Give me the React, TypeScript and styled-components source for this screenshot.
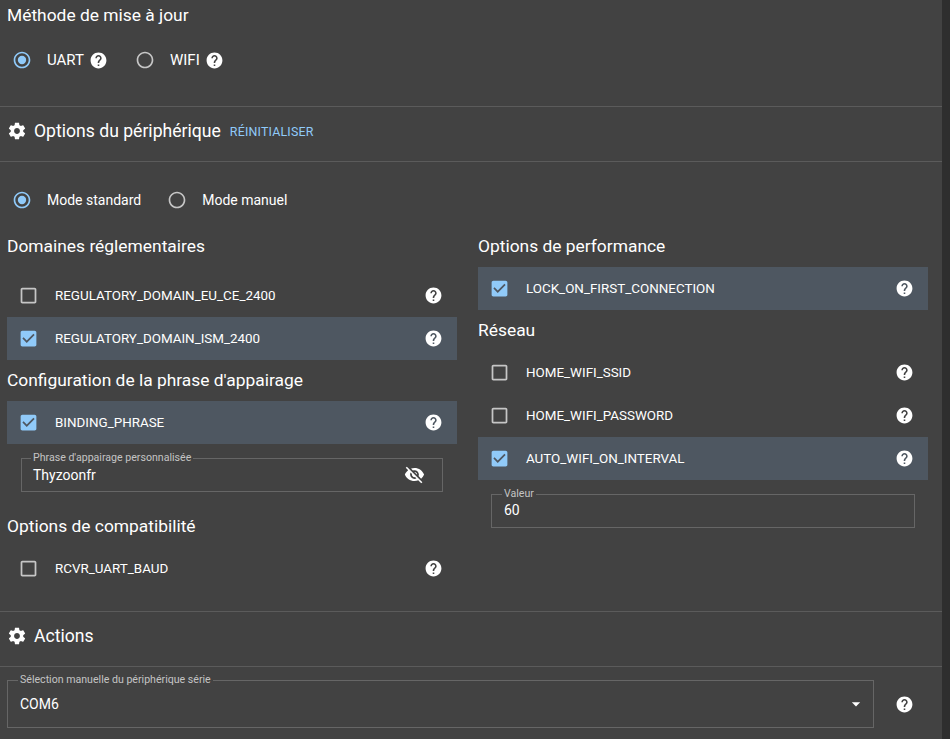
import styled, { createGlobalStyle } from 'styled-components';

const GlobalStyle = createGlobalStyle`
  html, body {
    margin: 0;
    height: 100%;
    overflow: hidden;
    background: #424242;
  }
  * {
    box-sizing: border-box;
  }
`;

const Page = styled.div`
  display: flex;
  height: 739px;
  overflow: hidden;
  color: #fff;
  font-family: Roboto, "Liberation Sans", sans-serif;
`;

const Main = styled.main`
  flex: 1;
  min-width: 0;
`;

const Scrollbar = styled.div`
  width: 8px;
  background: #2e2e2e;
`;

const Section = styled.section`
  padding: 0 7px;
`;

const UpdateSection = styled(Section)`
  height: 106px;
`;

const Title = styled.h6`
  margin: 0;
  font-size: 17.4px;
  font-weight: 400;
  line-height: 41px;
  height: 41px;
`;

const TopTitle = styled(Title)`
  height: 30px;
  line-height: 30px;
`;

const SectionHeader = styled.header`
  display: flex;
  align-items: center;
  height: 56px;
  padding: 0 8px 6px 7px;
  border-top: 1px solid #5b5b5b;
  border-bottom: 1px solid #5b5b5b;
  font-size: 17.6px;
`;

const HeaderIcon = styled.svg`
  width: 20px;
  height: 20px;
  margin-right: 7px;
  fill: #fff;
`;

const ResetLink = styled.a`
  margin-left: 9px;
  color: #90caf9;
  font-size: 12.4px;
  letter-spacing: 0.2px;
  text-transform: uppercase;
`;

const RadioRow = styled.div<{ $top: number }>`
  display: flex;
  align-items: center;
  height: 42px;
  margin-top: ${(p) => p.$top}px;
  padding-left: 5px;
`;

const RadioOption = styled.label<{ $gap: number; $caps?: boolean }>`
  display: flex;
  align-items: center;
  margin-right: ${(p) => p.$gap}px;
  font-size: ${(p) => (p.$caps ? 15 : 14)}px;
`;

const RadioSvg = styled.svg<{ $on: boolean }>`
  width: 20px;
  height: 20px;
  margin-right: 15px;
  fill: ${(p) => (p.$on ? '#90caf9' : 'rgba(255, 255, 255, 0.7)')};
`;

const HelpSvg = styled.svg`
  display: block;
  width: 19px;
  height: 19px;
  fill: #fff;
`;

const InlineHelp = styled(HelpSvg)`
  margin-left: 5px;
`;

const Columns = styled.div`
  display: grid;
  grid-template-columns: 450px 450px;
  column-gap: 21px;
  padding: 5px 7px 21px;
`;

const Column = styled.div`
  display: flex;
  flex-direction: column;
`;

const Spacer = styled.div`
  height: 7px;
`;

const OptionRow = styled.div<{ $selected?: boolean }>`
  display: flex;
  align-items: center;
  height: 43px;
  padding: 0 14px 0 11px;
  background: ${(p) => (p.$selected ? '#4e5761' : 'transparent')};
`;

const CheckSvg = styled.svg<{ $on: boolean }>`
  width: 21px;
  height: 21px;
  margin-right: 16px;
  fill: ${(p) => (p.$on ? '#90caf9' : 'rgba(255, 255, 255, 0.7)')};
`;

const OptionLabel = styled.span`
  flex: 1;
  font-size: 13.4px;
  white-space: nowrap;
`;

const Outlined = styled.fieldset<{ $height: number }>`
  display: flex;
  align-items: center;
  justify-content: space-between;
  min-width: 0;
  height: ${(p) => p.$height}px;
  margin: 0;
  padding: 0 12px;
  border: 1px solid #666;
  font-size: 14px;
`;

const Legend = styled.legend`
  margin-left: -2px;
  padding: 0 2px;
  color: rgba(255, 255, 255, 0.7);
  font-size: 10.6px;
  line-height: 12px;
`;

const PhraseField = styled(Outlined)`
  margin: 8px 14px 14px;
  padding-left: 11px;
`;

const ValueField = styled(Outlined)`
  margin: 8px 13px 0;
  padding-top: 2px;
`;

const EyeSvg = styled.svg`
  width: 21px;
  height: 21px;
  margin-right: 5px;
  fill: #fff;
`;

const ActionRow = styled.div`
  display: flex;
  align-items: center;
  padding: 7px 7px 0;
`;

const SelectField = styled(Outlined)`
  flex: 1;
  padding-bottom: 5px;
`;

const ArrowSvg = styled.svg`
  width: 20px;
  height: 20px;
  margin-right: -5px;
  fill: #fff;
`;

const HelpSlot = styled.div`
  display: flex;
  justify-content: center;
  width: 61px;
  margin-top: 6px;
`;

const HELP =
  'M12 2C6.48 2 2 6.48 2 12s4.48 10 10 10 10-4.48 10-10S17.52 2 12 2zm1 17h-2v-2h2v2zm2.07-7.75l-.9.92C13.45 12.9 13 13.5 13 15h-2v-.5c0-1.1.45-2.1 1.17-2.83l1.24-1.26c.37-.36.59-.86.59-1.41 0-1.1-.9-2-2-2s-2 .9-2 2H8c0-2.21 1.79-4 4-4s4 1.79 4 4c0 .88-.36 1.68-.93 2.25z';
const GEAR =
  'M19.43 12.98c.04-.32.07-.64.07-.98s-.03-.66-.07-.98l2.11-1.65c.19-.15.24-.42.12-.64l-2-3.46c-.12-.22-.39-.3-.61-.22l-2.49 1c-.52-.4-1.08-.73-1.69-.98l-.38-2.65C14.46 2.18 14.25 2 14 2h-4c-.25 0-.46.18-.49.42l-.38 2.65c-.61.25-1.17.59-1.69.98l-2.49-1c-.23-.09-.49 0-.61.22l-2 3.46c-.13.22-.07.49.12.64l2.11 1.65c-.04.32-.07.65-.07.98s.03.66.07.98l-2.11 1.65c-.19.15-.24.42-.12.64l2 3.46c.12.22.39.3.61.22l2.49-1c.52.4 1.08.73 1.69.98l.38 2.65c.03.24.24.42.49.42h4c.25 0 .46-.18.49-.42l.38-2.65c.61-.25 1.17-.59 1.69-.98l2.49 1c.23.09.49 0 .61-.22l2-3.46c.12-.22.07-.49-.12-.64l-2.11-1.65zM12 15.5c-1.93 0-3.5-1.57-3.5-3.5s1.57-3.5 3.5-3.5 3.5 1.57 3.5 3.5-1.57 3.5-3.5 3.5z';
const EYE_OFF =
  'M12 7c2.76 0 5 2.24 5 5 0 .65-.13 1.26-.36 1.83l2.92 2.92c1.51-1.26 2.7-2.89 3.43-4.75-1.73-4.39-6-7.5-11-7.5-1.4 0-2.74.25-3.98.7l2.16 2.16C10.74 7.13 11.35 7 12 7zM2 4.27l2.28 2.28.46.46C3.08 8.3 1.78 10.02 1 12c1.73 4.39 6 7.5 11 7.5 1.55 0 3.03-.3 4.38-.84l.42.42L19.73 22 21 20.73 3.27 3 2 4.27zM7.53 9.8l1.55 1.55c-.05.21-.08.43-.08.65 0 1.66 1.34 3 3 3 .22 0 .44-.03.65-.08l1.55 1.55c-.67.33-1.41.53-2.2.53-2.76 0-5-2.24-5-5 0-.79.2-1.53.53-2.2zm4.31-.78l3.15 3.15.02-.16c0-1.66-1.34-3-3-3l-.17.01z';
const BOX_OFF =
  'M19 5v14H5V5h14m0-2H5c-1.1 0-2 .9-2 2v14c0 1.1.9 2 2 2h14c1.1 0 2-.9 2-2V5c0-1.1-.9-2-2-2z';
const BOX_ON =
  'M19 3H5c-1.11 0-2 .9-2 2v14c0 1.1.89 2 2 2h14c1.11 0 2-.9 2-2V5c0-1.1-.89-2-2-2zm-9 14l-5-5 1.41-1.41L10 14.17l7.59-7.59L19 8l-9 9z';
const RING =
  'M12 2C6.48 2 2 6.48 2 12s4.48 10 10 10 10-4.48 10-10S17.52 2 12 2zm0 18c-4.42 0-8-3.58-8-8s3.58-8 8-8 8 3.58 8 8-3.58 8-8 8z';

const Help = () => (
  <HelpSvg viewBox="0 0 24 24">
    <path d={HELP} />
  </HelpSvg>
);

const Radio = ({ on, label, gap, help }: { on: boolean; label: string; gap: number; help?: boolean }) => (
  <RadioOption $gap={gap} $caps={help}>
    <RadioSvg $on={on} viewBox="0 0 24 24">
      <path d={RING} />
      {on && <circle cx="12" cy="12" r="5" />}
    </RadioSvg>
    {label}
    {help && (
      <InlineHelp viewBox="0 0 24 24">
        <path d={HELP} />
      </InlineHelp>
    )}
  </RadioOption>
);

const Option = ({ label, on = false }: { label: string; on?: boolean }) => (
  <OptionRow $selected={on}>
    <CheckSvg $on={on} viewBox="0 0 24 24">
      <path d={on ? BOX_ON : BOX_OFF} />
    </CheckSvg>
    <OptionLabel>{label}</OptionLabel>
    <Help />
  </OptionRow>
);

const Gear = () => (
  <HeaderIcon viewBox="0 0 24 24">
    <path d={GEAR} />
  </HeaderIcon>
);

export default function App() {
  return (
    <Page>
      <GlobalStyle />
      <Main>
        <UpdateSection>
          <TopTitle>Méthode de mise à jour</TopTitle>
          <RadioRow $top={9}>
            <Radio on label="UART" gap={27} help />
            <Radio on={false} label="WIFI" gap={0} help />
          </RadioRow>
        </UpdateSection>

        <SectionHeader>
          <Gear />
          Options du périphérique
          <ResetLink>Réinitialiser</ResetLink>
        </SectionHeader>

        <Section>
          <RadioRow $top={17}>
            <Radio on label="Mode standard" gap={26} />
            <Radio on={false} label="Mode manuel" gap={0} />
          </RadioRow>
        </Section>

        <Columns>
          <Column>
            <Title>Domaines réglementaires</Title>
            <Spacer />
            <Option label="REGULATORY_DOMAIN_EU_CE_2400" />
            <Option label="REGULATORY_DOMAIN_ISM_2400" on />
            <Title>Configuration de la phrase d'appairage</Title>
            <Option label="BINDING_PHRASE" on />
            <PhraseField $height={40}>
              <Legend>Phrase d'appairage personnalisée</Legend>
              Thyzoonfr
              <EyeSvg viewBox="0 0 24 24">
                <path d={EYE_OFF} />
              </EyeSvg>
            </PhraseField>
            <Title>Options de compatibilité</Title>
            <Option label="RCVR_UART_BAUD" />
          </Column>
          <Column>
            <Title>Options de performance</Title>
            <Option label="LOCK_ON_FIRST_CONNECTION" on />
            <Title>Réseau</Title>
            <Option label="HOME_WIFI_SSID" />
            <Option label="HOME_WIFI_PASSWORD" />
            <Option label="AUTO_WIFI_ON_INTERVAL" on />
            <ValueField $height={40}>
              <Legend>Valeur</Legend>
              60
            </ValueField>
          </Column>
        </Columns>

        <SectionHeader>
          <Gear />
          Actions
        </SectionHeader>

        <ActionRow>
          <SelectField $height={54}>
            <Legend>Sélection manuelle du périphérique série</Legend>
            COM6
            <ArrowSvg viewBox="0 0 24 24">
              <path d="M7 10l5 5 5-5z" />
            </ArrowSvg>
          </SelectField>
          <HelpSlot>
            <Help />
          </HelpSlot>
        </ActionRow>
      </Main>
      <Scrollbar />
    </Page>
  );
}
